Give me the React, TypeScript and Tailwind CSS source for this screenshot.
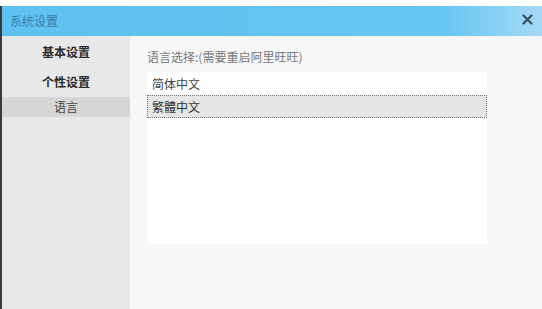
import React, { useState } from 'react';

const languages = ['简体中文', '繁體中文'];

const menu = [
  { label: '基本设置', bold: true },
  { label: '个性设置', bold: true },
];

const App: React.FC = () => {
  const [selected, setSelected] = useState(1);

  return (
    <div
      className="w-[542px] h-[309px] bg-white pt-[6px] overflow-hidden"
      style={{ fontFamily: '"Microsoft YaHei", "Noto Sans CJK SC", sans-serif' }}
    >
      <div className="h-[303px] flex flex-col border-l-2 border-[#3a3a3a]">
        {/* title bar */}
        <div className="h-[30px] flex items-center justify-between pl-2 pr-[9px] bg-gradient-to-r from-[#5ec1f0] via-[#66c6f2] via-[82%] to-[#a4d9f3]">
          <span className="text-[12px] text-[#3a7ea6]">系统设置</span>
          <svg width="11" height="11" viewBox="0 0 11 11" className="mb-[4px]">
            <path d="M1.5 1.5 L9.5 9.5 M9.5 1.5 L1.5 9.5" stroke="#3a4f60" strokeWidth="2.2" strokeLinecap="round" />
          </svg>
        </div>

        <div className="flex flex-1">
          {/* sidebar */}
          <div className="w-[128px] bg-[#e8e8e8] flex flex-col pt-px">
            {menu.map((m) => (
              <div key={m.label} className="h-[30px] flex items-center justify-center text-[12px] font-bold text-[#2a2a2a]">
                {m.label}
              </div>
            ))}
            <div className="h-[20px] flex items-center justify-center bg-[#d6d6d6] text-[12px] text-[#444]">
              语言
            </div>
          </div>

          {/* content */}
          <div className="flex-1 bg-[#f7f7f7] pl-[17px] pt-[12px]">
            <div className="text-[12px] text-[#777] h-[18px] leading-[18px]">语言选择:(需要重启阿里旺旺)</div>
            <div className="mt-[6px] w-[340px] h-[172px] bg-white">
              {languages.map((lang, i) => (
                <div
                  key={lang}
                  onClick={() => setSelected(i)}
                  className={
                    i === selected
                      ? 'h-[23px] flex items-center pl-[4px] text-[12px] text-[#333] bg-[#e6e6e6] border border-dotted border-[#777]'
                      : 'h-[23px] flex items-center pl-[5px] text-[12px] text-[#444]'
                  }
                >
                  {lang}
                </div>
              ))}
            </div>
          </div>
        </div>
      </div>
    </div>
  );
};

export default App;
